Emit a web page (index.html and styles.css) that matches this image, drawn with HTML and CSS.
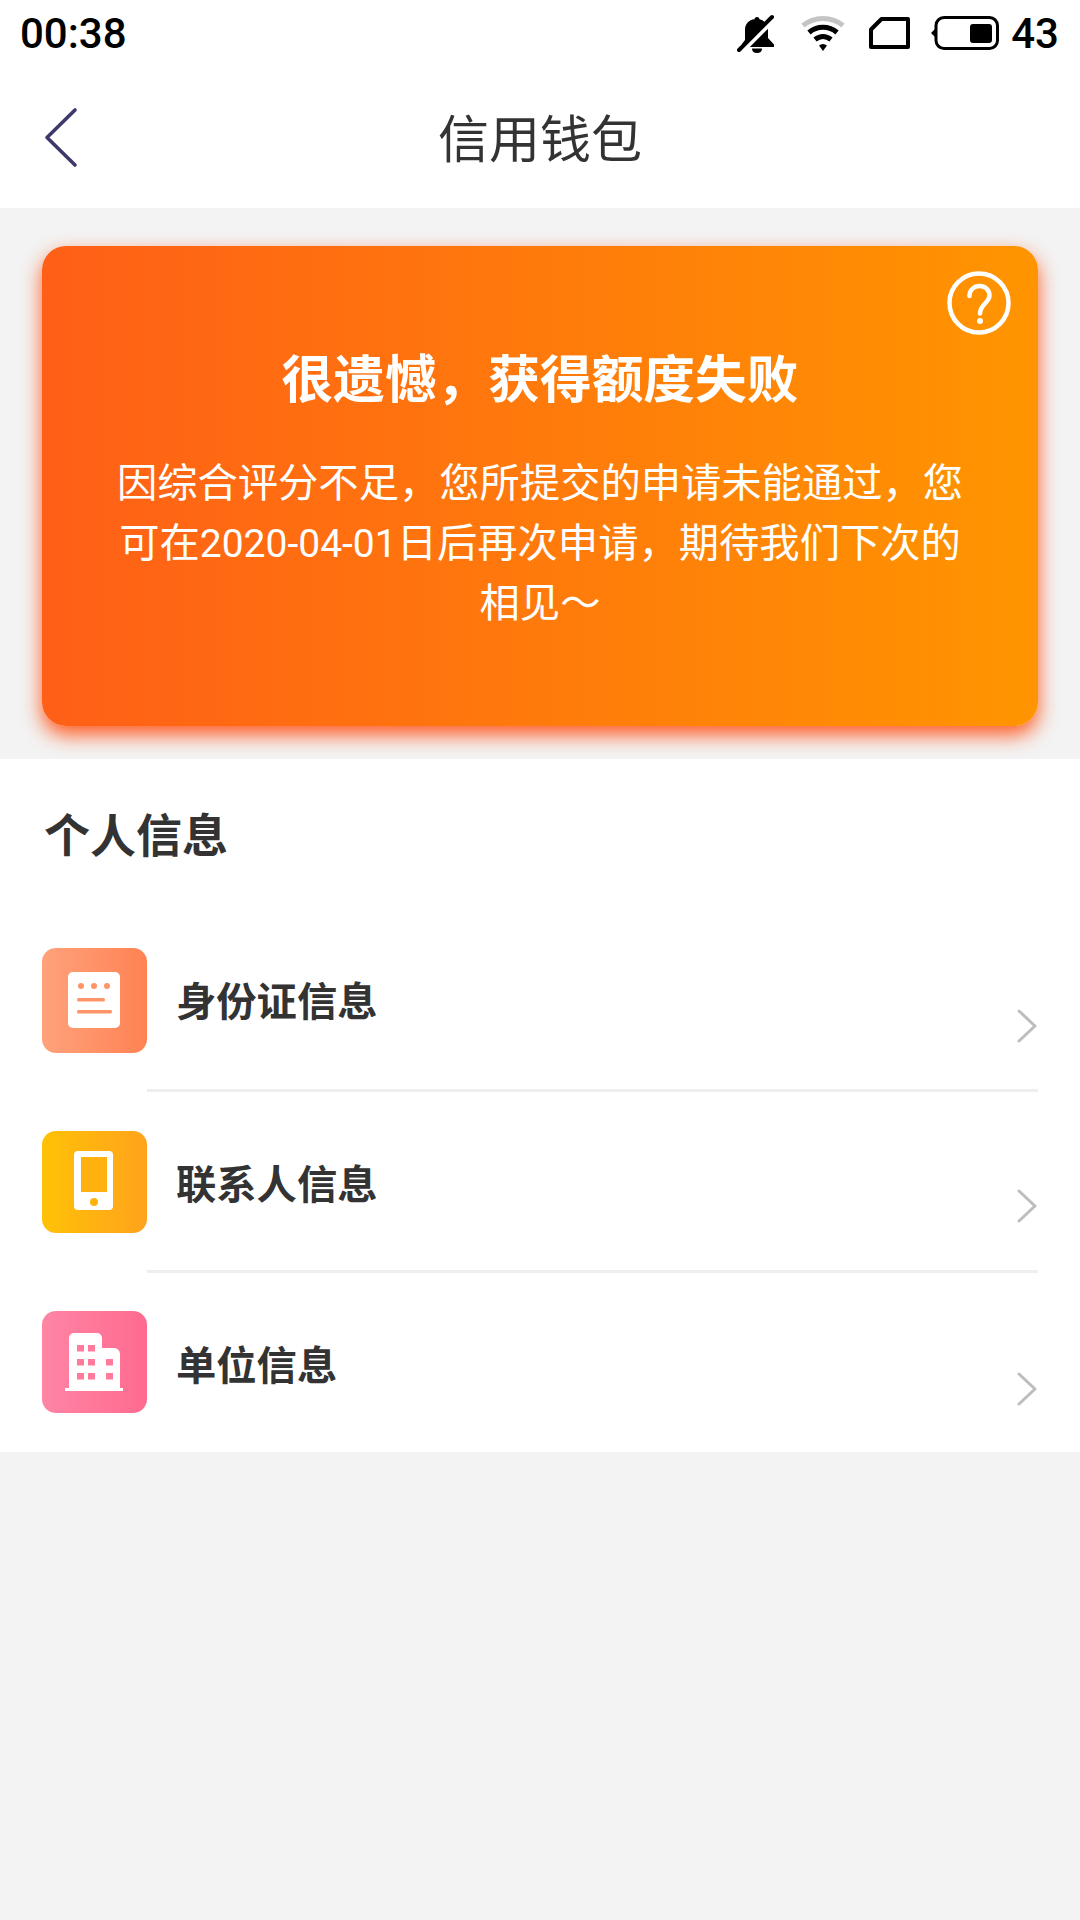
FILE: index.html
```html
<!DOCTYPE html>
<html lang="zh-CN">
<head>
<meta charset="utf-8">
<title>信用钱包</title>
<link rel="stylesheet" href="styles.css">
</head>
<body>
<div class="page">
  <header class="status">
    <span class="time">00:38</span>
    <div class="status-right">
      <svg class="ic-bell" viewBox="0 0 38 39"><path d="M20 3c1.500 0 2.500 1 2.500 2.300C28 6.500 31 11 31 16v8l6 6.500V33H5v-3l3-4V16C8 10 12 5.500 17.500 5.300 17.500 4 18.500 3 20 3z" fill="#000"/><path d="M15 34.500h10c0 3-2 4.500-5 4.500s-5-1.500-5-4.500z" fill="#000"/><path d="M5 38 38 5" stroke="#fff" stroke-width="4"/><path d="M2 36 35 3" stroke="#000" stroke-width="4" stroke-linecap="round"/></svg>
      <svg class="ic-wifi" viewBox="0 0 44 38"><path d="M2 11.500C13 2 31 2 42 11.500" fill="none" stroke="#c4c4c4" stroke-width="5"/><path d="M8 18.500C16 11.500 28 11.500 36 18.500" fill="none" stroke="#000" stroke-width="5"/><path d="M14 25.500C19 21.500 25 21.500 30 25.500" fill="none" stroke="#000" stroke-width="5"/><path d="M18 31.500C20.500 29.500 23.500 29.500 26 31.500L22 37z" fill="#000"/></svg>
      <svg class="ic-sim" viewBox="0 0 41 32"><path d="M12.500 2H39V30H2V12.500z" fill="none" stroke="#000" stroke-width="4" stroke-linejoin="round"/></svg>
      <svg class="ic-batt" viewBox="0 0 68 34"><path d="M0 17l4-4v8z" fill="#000"/><rect x="5" y="1.500" width="61.500" height="31" rx="8" fill="none" stroke="#000" stroke-width="3"/><rect x="39" y="8" width="22" height="19" rx="3" fill="#000"/></svg>
      <span class="batt-num">43</span>
    </div>
  </header>

  <nav class="nav">
    <svg class="back" viewBox="0 0 36 64"><path d="M31 3 3 30.500 31 58" fill="none" stroke="#3d3a6b" stroke-width="3.600" stroke-linecap="round" stroke-linejoin="round"/></svg>
    <h1 class="nav-title">信用钱包</h1>
  </nav>

  <section class="hero">
    <div class="card">
      <svg class="help" viewBox="0 0 64 64"><circle cx="32" cy="32" r="29.500" fill="none" stroke="#fff" stroke-width="4.500"/><path d="M22.500 25c0-6 4.500-10 10-10s10 4 10 9.500c0 7-9.500 9-9.500 18" fill="none" stroke="#fff" stroke-width="4.500" stroke-linecap="round"/><circle cx="33" cy="50" r="3" fill="#fff"/></svg>
      <h2 class="card-title">很遗憾，获得额度失败</h2>
      <div class="card-text">
        <p class="line">因综合评分不足，您所提交的申请未能通过，您</p>
        <p class="line">可在<span class="date">2020-04-01</span>日后再次申请，期待我们下次的</p>
        <p class="line">相见～</p>
      </div>
    </div>
  </section>

  <section class="info">
    <h3 class="info-title">个人信息</h3>
    <ul class="rows">
      <li class="row">
        <span class="tile tile-id">
          <svg viewBox="0 0 105 105"><rect x="26" y="24" width="52" height="56" rx="5" fill="#fff"/><g fill="#ff9468"><circle cx="39" cy="38" r="3"/><circle cx="52" cy="38" r="3"/><circle cx="65" cy="38" r="3"/><rect x="35" y="50" width="28" height="3.500" rx="1.500"/><rect x="35" y="62" width="35" height="3.500" rx="1.500"/></g></svg>
        </span>
        <span class="row-body">
          <span class="row-label">身份证信息</span>
          <svg class="chev" viewBox="0 0 20 34"><path d="M2 2l16 15L2 32" fill="none" stroke="#bdbdbd" stroke-width="3" stroke-linecap="round" stroke-linejoin="round"/></svg>
        </span>
      </li>
      <li class="row">
        <span class="tile tile-phone">
          <svg viewBox="0 0 105 102"><rect x="32" y="20" width="39" height="59" rx="4" fill="#fff"/><rect x="39" y="26" width="26" height="35" fill="#ffb20f"/><circle cx="52" cy="71" r="4" fill="#ffb20f"/></svg>
        </span>
        <span class="row-body">
          <span class="row-label">联系人信息</span>
          <svg class="chev" viewBox="0 0 20 34"><path d="M2 2l16 15L2 32" fill="none" stroke="#bdbdbd" stroke-width="3" stroke-linecap="round" stroke-linejoin="round"/></svg>
        </span>
      </li>
      <li class="row">
        <span class="tile tile-unit">
          <svg viewBox="0 0 105 102"><path d="M27 27a5 5 0 0 1 5-5h23a5 5 0 0 1 5 5v10h12a6 6 0 0 1 6 6v34h3v3H23v-3h4z" fill="#fff"/><g fill="#ff7a9b"><rect x="35" y="34" width="7" height="6.500"/><rect x="46" y="34" width="7" height="6.500"/><rect x="35" y="48" width="7" height="6.500"/><rect x="46" y="48" width="7" height="6.500"/><rect x="64" y="48" width="7" height="6.500"/><rect x="35" y="62" width="7" height="6.500"/><rect x="46" y="62" width="7" height="6.500"/><rect x="64" y="62" width="7" height="6.500"/></g></svg>
        </span>
        <span class="row-body">
          <span class="row-label">单位信息</span>
          <svg class="chev" viewBox="0 0 20 34"><path d="M2 2l16 15L2 32" fill="none" stroke="#bdbdbd" stroke-width="3" stroke-linecap="round" stroke-linejoin="round"/></svg>
        </span>
      </li>
    </ul>
  </section>
</div>
</body>
</html>
```
FILE: styles.css
```css
* { box-sizing: border-box; }
html, body { margin: 0; padding: 0; }
body {
  width: 1080px;
  height: 1920px;
  overflow: hidden;
  background: #f3f3f3;
  font-family: Roboto, "Noto Sans CJK SC", sans-serif;
  color: #333;
}
.page { display: flex; flex-direction: column; height: 1920px; }

.status {
  height: 70px;
  background: #fff;
  display: flex;
  align-items: center;
  justify-content: space-between;
  padding: 0 21px 2px 20px;
  color: #000;
}
.time { font-size: 42px; font-weight: 500; line-height: 1; }
.status-right { display: flex; align-items: center; }
.status-right svg { display: block; flex: none; margin-bottom: 2px; }
.status-right .ic-bell { width: 38px; height: 39px; margin-right: 26px; }
.status-right .ic-wifi { width: 44px; height: 38px; margin-right: 24px; }
.status-right .ic-sim { width: 41px; height: 32px; margin-right: 21px; }
.status-right .ic-batt { width: 68px; height: 34px; margin-right: 12px; }
.batt-num { font-size: 42px; font-weight: 500; line-height: 1; }

.nav {
  height: 138px;
  background: #fff;
  display: flex;
  align-items: center;
  justify-content: center;
  position: relative;
}
.back { position: absolute; left: 44px; top: 37px; width: 36px; height: 64px; }
.nav-title { margin: 2px 0 0; font-size: 51px; font-weight: 400; color: #333; line-height: 1; }

.hero { padding: 38px 42px 33px; }
.card {
  position: relative;
  height: 480px;
  border-radius: 24px;
  background: linear-gradient(90deg, #ff5f17, #ff9500);
  box-shadow: 0 9px 20px rgba(255, 85, 25, .95);
  padding: 99px 40px 0;
  color: #fff;
  text-align: center;
}
.help { position: absolute; right: 27px; top: 25px; width: 64px; height: 64px; display: block; }
.card-title { margin: 0 0 37px; font-size: 51.700px; font-weight: 700; line-height: 72px; }
.card-text { font-size: 40.300px; line-height: 60px; font-weight: 400; }
.line { margin: 0; }
.date { font-size: 39px; }

.info { background: #fff; }
.info-title {
  margin: 0;
  height: 152px;
  padding: 47px 0 0 44px;
  font-size: 46px;
  font-weight: 700;
  line-height: 60px;
  color: #333;
}
.rows { list-style: none; margin: 0; padding: 0; }
.row {
  display: flex;
  height: 181px;
  padding-left: 42px;
}
.row:last-child { height: 179px; }
.tile {
  flex: none;
  width: 105px;
  height: 102px;
  margin-top: 38px;
  border-radius: 14px;
  overflow: hidden;
}
.tile svg { display: block; width: 105px; height: 102px; filter: blur(.5px); }
.tile-id { height: 105px; margin-top: 37px; background: linear-gradient(90deg, #ffa27c, #ff8253); }
.tile-id svg { height: 105px; }
.tile-phone { margin-top: 39px; background: linear-gradient(90deg, #ffc107, #ffa31c); }
.tile-unit { background: linear-gradient(90deg, #ff85a5, #ff6a90); }
.row-body {
  flex: 1;
  margin-right: 42px;
  border-bottom: 3px solid #eee;
  display: flex;
  justify-content: space-between;
  padding: 66px 1px 0 29px;
}
.row:first-child .row-body { padding-top: 64px; }
.row:last-child .row-body { border-bottom: 0; }
.row-label { font-size: 40.300px; font-weight: 700; line-height: 56px; color: #333; }
.chev { width: 20px; height: 34px; margin-top: 31px; display: block; flex: none; }
.row:first-child .chev { margin-top: 34px; }
.row:last-child .chev { margin-top: 33px; }
```
